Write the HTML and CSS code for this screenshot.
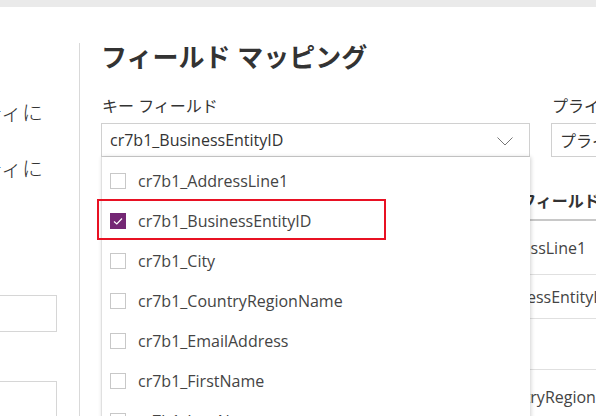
FILE: index.html
```html
<!DOCTYPE html>
<html lang="ja">
<head>
<meta charset="utf-8">
<link rel="stylesheet" href="styles.css">
</head>
<body>
<div class="topbar"></div>
<div class="main">
  <aside class="left">
    <div class="left-text first"><span>新しいエンティティに</span></div>
    <div class="left-text second"><span>既存のエンティティに</span></div>
    <div class="left-input one"></div>
    <div class="left-input two"></div>
  </aside>
  <div class="divider"></div>
  <section class="content">
    <h1 class="title">フィールド マッピング</h1>
    <div class="form-row">
      <div class="field key">
        <label class="label">キー フィールド</label>
        <div class="select">
          <span class="select-text">cr7b1_BusinessEntityID</span>
          <svg class="chevron" width="16" height="9" viewBox="0 0 16 9"><polyline points="0.5,0.5 8,8 15.5,0.5" fill="none" stroke="#777" stroke-width="1"/></svg>
        </div>
        <div class="dropdown">
          <div class="option"><span class="cb"></span><span>cr7b1_AddressLine1</span></div>
          <div class="option"><span class="cb checked"><svg width="16" height="16" viewBox="0 0 16 16"><polyline points="4,8.5 6.8,11 12,5.5" fill="none" stroke="#fff" stroke-width="1.2"/></svg></span><span>cr7b1_BusinessEntityID</span></div>
          <div class="option"><span class="cb"></span><span>cr7b1_City</span></div>
          <div class="option"><span class="cb"></span><span>cr7b1_CountryRegionName</span></div>
          <div class="option"><span class="cb"></span><span>cr7b1_EmailAddress</span></div>
          <div class="option"><span class="cb"></span><span>cr7b1_FirstName</span></div>
          <div class="option"><span class="cb"></span><span>cr7b1_LastName</span></div>
          <div class="highlight"></div>
        </div>
      </div>
      <div class="field primary">
        <label class="label">プライマリ名フィールド</label>
        <div class="select plain"><span class="select-text">プライマリ名フィールド</span></div>
      </div>
    </div>
    <div class="table">
      <div class="trow head"><span class="c1">ソース</span><span class="c2">ターゲット フィールド</span></div>
      <div class="trow r1"><span class="c1"></span><span class="c2">cr7b1_AddressLine1</span></div>
      <div class="trow r2"><span class="c1"></span><span class="c2">cr7b1_BusinessEntityID</span></div>
      <div class="trow r3"><span class="c1"></span><span class="c2"></span></div>
      <div class="trow r4"><span class="c1"></span><span class="c2">cr7b1_CountryRegionName</span></div>
    </div>
  </section>
</div>
</body>
</html>
```

FILE: styles.css
```css
* { box-sizing: border-box; }
html, body {
  margin: 0;
  padding: 0;
  width: 596px;
  height: 416px;
  overflow: hidden;
  background: #fff;
  font-family: "Open Sans", "Noto Sans CJK JP", sans-serif;
  color: #333;
}
.topbar {
  height: 7px;
  background: #eaeaea;
}
.main {
  display: flex;
  height: 409px;
}
.left {
  width: 79px;
  flex: none;
  overflow: hidden;
  display: flex;
  flex-direction: column;
  padding-right: 37px;
}
.left-text {
  display: flex;
  justify-content: flex-end;
  white-space: nowrap;
  font-size: 21px;
  line-height: 24px;
  font-weight: 300;
  color: #333;
  margin-right: -1px;
}
.left-text.first { margin-top: 93px; }
.left-text.second { margin-top: 32px; }
.left-input {
  flex: none;
  width: 77px;
  margin-left: -20px;
  height: 37px;
  border: 1px solid #d6d6d6;
}
.left-input.one { margin-top: 115px; }
.left-input.two { margin-top: 49px; height: 60px; }
.divider {
  width: 1px;
  flex: none;
  background: #d9d9d9;
  margin-top: 36px;
}
.content {
  flex: 1;
  padding-left: 21px;
  min-width: 0;
}
.title {
  margin: 34px 0 0 0;
  font-size: 26px;
  line-height: 32px;
  font-weight: 600;
  color: #333;
  white-space: nowrap;
}
.form-row {
  display: flex;
  gap: 21px;
  margin-top: 22px;
}
.field { position: relative; flex: none; }
.field.key { width: 429px; }
.field.primary { width: 200px; }
.label {
  display: block;
  font-size: 16px;
  line-height: 22px;
  color: #333;
  white-space: nowrap;
  margin-left: 1px;
}
.select {
  margin-top: 6px;
  height: 34px;
  border: 1px solid #d0d0d0;
  display: flex;
  align-items: center;
  padding-left: 8px;
  padding-right: 16px;
  white-space: nowrap;
  overflow: hidden;
}
.select-text {
  flex: 1;
  font-size: 16px;
  color: #333;
}
.chevron { flex: none; margin-top: 2px; }
.dropdown {
  position: absolute;
  top: 62px;
  left: 0;
  width: 429px;
  height: 300px;
  background: #fff;
  border-left: 1px solid #e0e0e0;
  box-shadow: 1px 0 4px rgba(0, 0, 0, 0.18);
  padding-top: 4px;
  padding-left: 8px;
  z-index: 5;
}
.option {
  height: 40px;
  display: flex;
  align-items: center;
  gap: 12px;
  font-size: 16px;
  color: #444;
  white-space: nowrap;
}
.cb {
  width: 16px;
  height: 16px;
  border: 1px solid #c8c8c8;
  flex: none;
  display: block;
}
.cb.checked {
  background: #742774;
  border-color: #742774;
}
.cb svg { display: block; margin: -1px; }
.highlight {
  position: absolute;
  left: -5px;
  top: 42px;
  width: 289px;
  height: 41px;
  border: 2px solid #e81123;
}
.table {
  margin-top: 24px;
  width: 720px;
}
.trow {
  display: flex;
  align-items: center;
  border-bottom: 1px solid #e0e0e0;
  white-space: nowrap;
  font-size: 16px;
  color: #444;
}
.trow .c1 { width: 335px; flex: none; }
.trow .c2 { flex: 1; }
.trow.head {
  height: 40px;
  font-weight: 700;
  color: #333;
  border-bottom: 2px solid #c8c8c8;
}
.trow.r1 { height: 54px; }
.trow.r2 { height: 44px; }
.trow.r3 { height: 51px; }
.trow.r4 { height: 54px; }
```
